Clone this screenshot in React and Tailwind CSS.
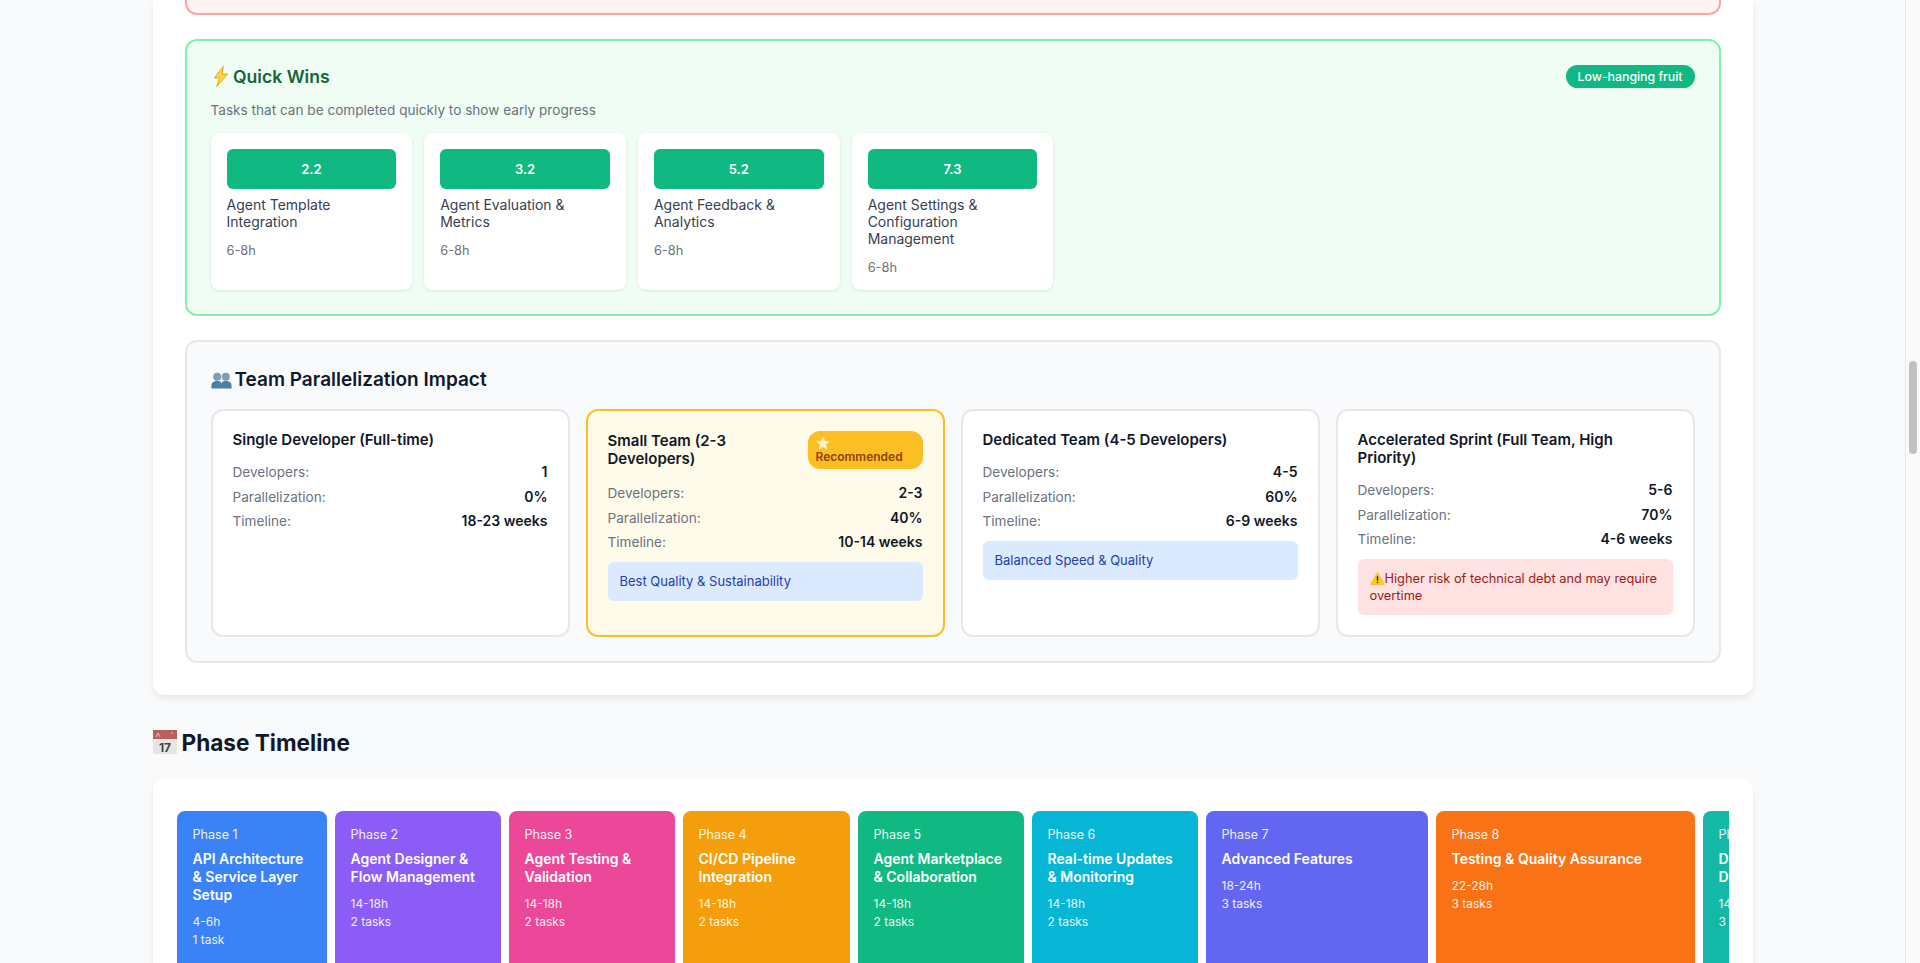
import React from 'react';

const quickWins = [
  { id: '2.2', name: 'Agent Template Integration', hours: '6-8h' },
  { id: '3.2', name: 'Agent Evaluation & Metrics', hours: '6-8h' },
  { id: '5.2', name: 'Agent Feedback & Analytics', hours: '6-8h' },
  { id: '7.3', name: 'Agent Settings & Configuration Management', hours: '6-8h' },
];

const scenarios = [
  { title: 'Single Developer (Full-time)', devs: '1', par: '0%', time: '18-23 weeks' },
  { title: 'Small Team (2-3 Developers)', devs: '2-3', par: '40%', time: '10-14 weeks', recommended: true, note: 'Best Quality & Sustainability' },
  { title: 'Dedicated Team (4-5 Developers)', devs: '4-5', par: '60%', time: '6-9 weeks', note: 'Balanced Speed & Quality' },
  { title: 'Accelerated Sprint (Full Team, High Priority)', devs: '5-6', par: '70%', time: '4-6 weeks', warning: 'Higher risk of technical debt and may require overtime' },
];

const phases = [
  { label: 'Phase 1', title: 'API Architecture & Service Layer Setup', hours: '4-6h', tasks: '1 task', cls: 'w-[150px] bg-[#3b82f6]' },
  { label: 'Phase 2', title: 'Agent Designer & Flow Management', hours: '14-18h', tasks: '2 tasks', cls: 'w-[166px] bg-[#8b5cf6]' },
  { label: 'Phase 3', title: 'Agent Testing & Validation', hours: '14-18h', tasks: '2 tasks', cls: 'w-[166px] bg-[#ec4899]' },
  { label: 'Phase 4', title: 'CI/CD Pipeline Integration', hours: '14-18h', tasks: '2 tasks', cls: 'w-[167px] bg-[#f59e0b]' },
  { label: 'Phase 5', title: 'Agent Marketplace & Collaboration', hours: '14-18h', tasks: '2 tasks', cls: 'w-[166px] bg-[#10b981]' },
  { label: 'Phase 6', title: 'Real-time Updates & Monitoring', hours: '14-18h', tasks: '2 tasks', cls: 'w-[166px] bg-[#06b6d4]' },
  { label: 'Phase 7', title: 'Advanced Features', hours: '18-24h', tasks: '3 tasks', cls: 'w-[222px] bg-[#6366f1]' },
  { label: 'Phase 8', title: 'Testing & Quality Assurance', hours: '22-28h', tasks: '3 tasks', cls: 'w-[259px] bg-[#f97316]' },
  { label: 'Phase 9', title: 'Documentation & Deployment', hours: '14-18h', tasks: '3 tasks', cls: 'w-[166px] bg-[#14b8a6]' },
];

const BoltEmoji = () => (
  <svg viewBox="0 0 16 22" className="w-4 h-[21px] shrink-0">
    <path d="M10.5 0.5 L1 12.5 H6.5 L3.5 21.5 L15 8.5 H9 Z" fill="#fcd34d" stroke="#f59e0b" strokeWidth="1" strokeLinejoin="round" />
  </svg>
);

const UsersEmoji = () => (
  <svg viewBox="0 0 22 18" className="w-[21px] h-[18px] shrink-0">
    <circle cx="6.5" cy="5.5" r="4.2" fill="#7c9cb8" />
    <circle cx="15.5" cy="5.5" r="4.2" fill="#7c9cb8" />
    <path d="M0.5 18 V15 C0.5 11.5 3 10 6.5 10 C10 10 11 11.5 11 13 C11 11.5 12 10 15.5 10 C19 10 21.5 11.5 21.5 15 V18 Z" fill="#4d7ea3" />
  </svg>
);

const CalendarEmoji = () => (
  <svg viewBox="0 0 24 24" className="w-6 h-6 shrink-0">
    <rect x="0" y="0" width="24" height="24" fill="#e5e5e5" />
    <rect x="0" y="0" width="24" height="9" fill="#b8605e" />
    <path d="M3 7 L5 3 L7 7 M18 2 L20 4" stroke="#f3dcdc" strokeWidth="0.8" fill="none" />
    <text x="12" y="22" textAnchor="middle" fontSize="12" fontFamily="Inter, sans-serif" fill="#444">17</text>
  </svg>
);

const StarEmoji = () => (
  <svg viewBox="0 0 14 14" className="w-[14px] h-[14px] block">
    <path d="M7 0.5 L9 5 L13.5 5.4 L10 8.5 L11 13.5 L7 10.8 L3 13.5 L4 8.5 L0.5 5.4 L5 5 Z" fill="#fef3c7" stroke="#fde68a" strokeWidth="0.5" />
  </svg>
);

const WarningEmoji = () => (
  <svg viewBox="0 0 16 14" className="inline-block w-[15px] h-[13px] align-[-2px]">
    <path d="M8 0.5 L15.5 13.5 H0.5 Z" fill="#facc15" stroke="#eab308" strokeWidth="0.6" strokeLinejoin="round" />
    <rect x="7.3" y="4.5" width="1.4" height="5" fill="#222" />
    <rect x="7.3" y="10.5" width="1.4" height="1.5" fill="#222" />
  </svg>
);

const QuickWinCard = ({ item }) => (
  <div className="bg-white rounded-lg px-4 pt-4 pb-[15px] shadow-[0_1px_3px_rgba(0,0,0,0.1)]">
    <div className="h-10 rounded-md bg-[#10b981] flex items-center justify-center text-white text-[13px] font-semibold">
      {item.id}
    </div>
    <div className="mt-[7px] text-[14px] leading-[17px] text-[#374151]">{item.name}</div>
    <div className="mt-[13px] text-[12.8px] text-[#6b7280]">{item.hours}</div>
  </div>
);

const Row = ({ label, value }) => (
  <div className="flex justify-between leading-[16.7px]">
    <span className="text-[13.6px] text-[#6b7280]">{label}</span>
    <span className="text-[14px] font-semibold text-[#111827]">{value}</span>
  </div>
);

const ScenarioCard = ({ s }) => (
  <div className={`rounded-xl border-2 p-5 ${s.recommended ? 'border-[#fbbf24] bg-[#fffbeb]' : 'border-[#e5e7eb] bg-white'}`}>
    <div className={`flex items-center justify-between gap-3 ${s.recommended ? 'mb-4' : 'mb-[15px]'}`}>
      <div className="text-[15px] leading-[18px] font-semibold text-[#111827]">{s.title}</div>
      {s.recommended && (
        <div className="w-[115px] shrink-0 rounded-xl bg-[#fbbf24] px-2 py-[5px] text-[12px] leading-[14px] font-semibold text-[#92400e]">
          <StarEmoji />
          Recommended
        </div>
      )}
    </div>
    <div className="flex flex-col gap-2">
      <Row label="Developers:" value={s.devs} />
      <Row label="Parallelization:" value={s.par} />
      <Row label="Timeline:" value={s.time} />
    </div>
    {s.note && (
      <div className="mt-[10.5px] rounded-md bg-[#dbeafe] p-3 text-[13px] leading-[15px] text-[#1e40af]">{s.note}</div>
    )}
    {s.warning && (
      <div className="mt-[10.5px] rounded-md bg-[#fee2e2] px-3 py-[11px] text-[12.8px] leading-[17px] text-[#991b1b]">
        <WarningEmoji />
        {s.warning}
      </div>
    )}
  </div>
);

const PhaseBlock = ({ p }) => (
  <div className={`shrink-0 h-[220px] rounded-lg p-4 text-white ${p.cls}`}>
    <div className="text-[12.6px] opacity-90 mb-2">{p.label}</div>
    <div className="text-[14px] font-semibold leading-[1.3] mb-[9px]">{p.title}</div>
    <div className="text-[12px] leading-[18px] opacity-90">{p.hours}</div>
    <div className="text-[12px] leading-[18px] opacity-90">{p.tasks}</div>
  </div>
);

export default function App() {
  return (
    <div className="flex h-screen overflow-hidden bg-[#f9fafb] font-['Inter',sans-serif] leading-[normal]">
      <div className="flex-1 min-w-0">
        <div className="w-[1600px] mx-auto">
          {/* Roadmap overview card, scrolled past its top */}
          <div className="bg-white rounded-b-xl shadow-[0_4px_6px_rgba(0,0,0,0.07)] px-8 pb-8">
            <div className="h-[15px] mb-6 rounded-b-xl border-2 border-t-0 border-[#fca5a5] bg-[#fef2f2]" />

            <div className="rounded-xl border-2 border-[#86efac] bg-[#f0fdf4] p-6 mb-6">
              <div className="flex items-center justify-between mb-[14px]">
                <div className="flex items-center text-[17.6px] font-semibold text-[#166534]">
                  <span className="w-[22.5px] flex items-center pl-[2px]"><BoltEmoji /></span>
                  Quick Wins
                </div>
                <span className="rounded-full bg-[#10b981] px-3 py-1 text-[12.3px] font-medium text-white">Low-hanging fruit</span>
              </div>
              <p className="text-[13.6px] text-[#6b7280] mb-[15px]">Tasks that can be completed quickly to show early progress</p>
              <div className="grid grid-cols-7 gap-3">
                {quickWins.map((item) => (
                  <QuickWinCard key={item.id} item={item} />
                ))}
              </div>
            </div>

            <div className="rounded-xl border-2 border-[#e5e7eb] bg-[#f9fafb] p-6">
              <div className="flex items-center text-[19px] font-semibold text-[#111827] mb-[18px] pt-[2px]">
                <span className="w-6 flex items-center"><UsersEmoji /></span>
                Team Parallelization Impact
              </div>
              <div className="grid grid-cols-4 gap-4">
                {scenarios.map((s) => (
                  <ScenarioCard key={s.title} s={s} />
                ))}
              </div>
            </div>
          </div>

          {/* Phase timeline */}
          <div className="mt-[34px] mb-[23px] flex items-center text-[22.6px] font-bold text-[#111827]">
            <span className="w-[29px]"><CalendarEmoji /></span>
            Phase Timeline
          </div>
          <div className="bg-white rounded-xl shadow-[0_4px_6px_rgba(0,0,0,0.07)] px-6 pt-8 pb-6">
            <div className="flex gap-2 overflow-hidden">
              {phases.map((p) => (
                <PhaseBlock key={p.label} p={p} />
              ))}
            </div>
          </div>
        </div>
      </div>

      {/* Scrollbar */}
      <div className="w-[15px] shrink-0 border-l border-[#e5e7eb] bg-[#fafafa] pl-[3px] pt-[361px]">
        <div className="w-2 h-[93px] rounded-full bg-[#c1c1c1]" />
      </div>
    </div>
  );
}
